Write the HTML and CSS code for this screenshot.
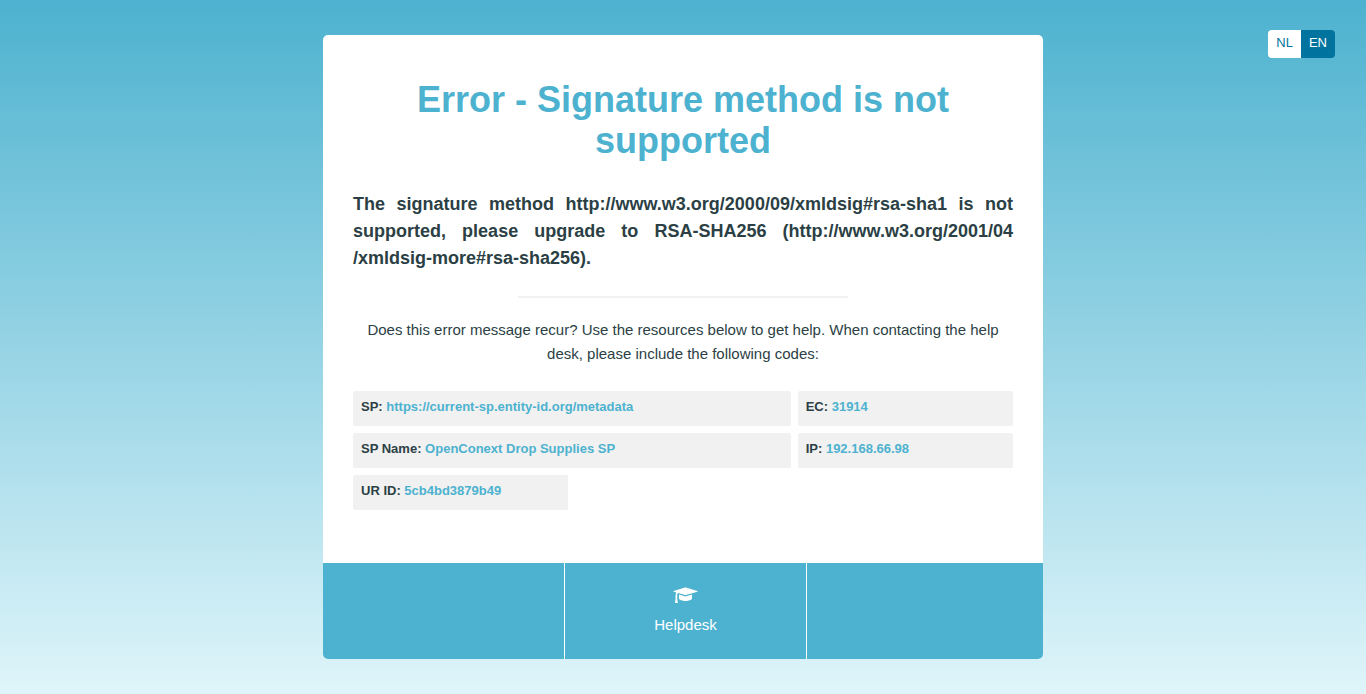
FILE: index.html
```html
<!DOCTYPE html>
<html lang="en">
<head>
<meta charset="utf-8">
<meta name="viewport" content="width=device-width, initial-scale=1">
<title>Error - Signature method is not supported</title>
<link rel="stylesheet" href="styles.css">
</head>
<body>
<nav class="languages" aria-label="Language">
  <a class="language" href="#nl">NL</a>
  <a class="language language-active" href="#en">EN</a>
</nav>
<main class="card">
  <div class="content">
    <h1 class="title">Error - Signature method is not supported</h1>
    <p class="message">The signature method http://www.w3.org/2000/09/xmldsig#rsa-sha1 is not supported, please upgrade to RSA-SHA256 (http://www.w3.org/2001/04<wbr>/xmldsig-more#rsa-sha256).</p>
    <hr class="divider">
    <p class="help">Does this error message recur? Use the resources below to get help. When contacting the help desk, please include the following codes:</p>
    <dl class="codes">
      <div class="code code-wide"><dt>SP:</dt> <dd>https://current-sp.entity-id.org/metadata</dd></div>
      <div class="code"><dt>EC:</dt> <dd>31914</dd></div>
      <div class="code code-wide"><dt>SP Name:</dt> <dd>OpenConext Drop Supplies SP</dd></div>
      <div class="code"><dt>IP:</dt> <dd>192.168.66.98</dd></div>
      <div class="code"><dt>UR ID:</dt> <dd>5cb4bd3879b49</dd></div>
    </dl>
  </div>
  <footer class="footer">
    <div class="cell"></div>
    <div class="cell">
      <a class="helpdesk" href="#helpdesk">
        <svg class="cap" viewBox="0 0 25 18" aria-hidden="true"><path fill="currentColor" d="M12 .6Q12.500 .5 13 .6L24.300 3.900Q25.200 4.300 24.300 4.700L13 8.100Q12.500 8.200 12 8.100L5 6Q4.200 6.500 4.100 8.600Q4.700 9.700 4.100 10.500L4.800 16H2L2.700 10.500Q2.100 9.700 2.700 8.600Q2.700 6.600 3.300 5.500L.7 4.700Q-.2 4.300 .7 3.900ZM6 7.500L11.800 9.300Q12.500 9.500 13.200 9.300L19 7.500V11.200C18.500 14.800 6.500 14.800 6 11.200Z"/></svg>
        <span>Helpdesk</span>
      </a>
    </div>
    <div class="cell"></div>
  </footer>
</main>
</body>
</html>
```
FILE: styles.css
```css
* { box-sizing: border-box; }
html { min-height: 100%; background: linear-gradient(#4db2cf, #dff5fa); }
body {
  margin: 0;
  padding: 35px 16px;
  color: #2b3f45;
  font: 15px/24px "Liberation Sans", Arial, sans-serif;
}
a { text-decoration: none; }
.languages {
  position: absolute;
  top: 30px;
  right: 31px;
  display: flex;
  overflow: hidden;
  border-radius: 4px;
}
.language {
  padding: 0 8px 2px;
  background: #fff;
  color: #00749e;
  font-size: 13px;
  line-height: 26px;
}
.language-active { background: #00749e; color: #fff; }
.card {
  max-width: 720px;
  margin: 0 auto;
  overflow: hidden;
  border-radius: 5px;
  background: #fff;
}
.content { padding: 44px 30px 53px; }
.title {
  margin: 0 0 30px;
  padding: 0 30px;
  color: #4db2cf;
  font-size: 36px;
  line-height: 41px;
  text-align: center;
}
.message {
  margin: 0 0 24px;
  font-size: 18px;
  font-weight: bold;
  line-height: 27px;
  text-align: justify;
}
.divider {
  width: 50%;
  margin: 0 auto 20px;
  border: 0;
  border-top: 2px solid #f1f1f1;
}
.help { margin: 0 0 25px; text-align: center; }
.codes {
  display: grid;
  grid-template-columns: repeat(3, 1fr);
  gap: 7px;
  margin: 0;
}
.code {
  padding: 4px 8px 7px;
  border-radius: 2px;
  background: #f1f1f1;
  font-size: 13px;
  font-weight: bold;
}
.code-wide { grid-column: span 2; }
.code dt, .code dd { display: inline; margin: 0; }
.code dd { color: #4db2cf; }
.footer {
  display: grid;
  grid-template-columns: 242fr 242fr 236fr;
  background: #4db2cf;
}
.cell { min-height: 96px; }
.cell:not(:last-child) { border-right: 1px solid #fff; }
.helpdesk {
  display: flex;
  flex-direction: column;
  align-items: center;
  padding: 24px 0 22px;
  color: #fff;
}
.cap { width: 25px; height: 18px; margin-bottom: 8px; }
```
